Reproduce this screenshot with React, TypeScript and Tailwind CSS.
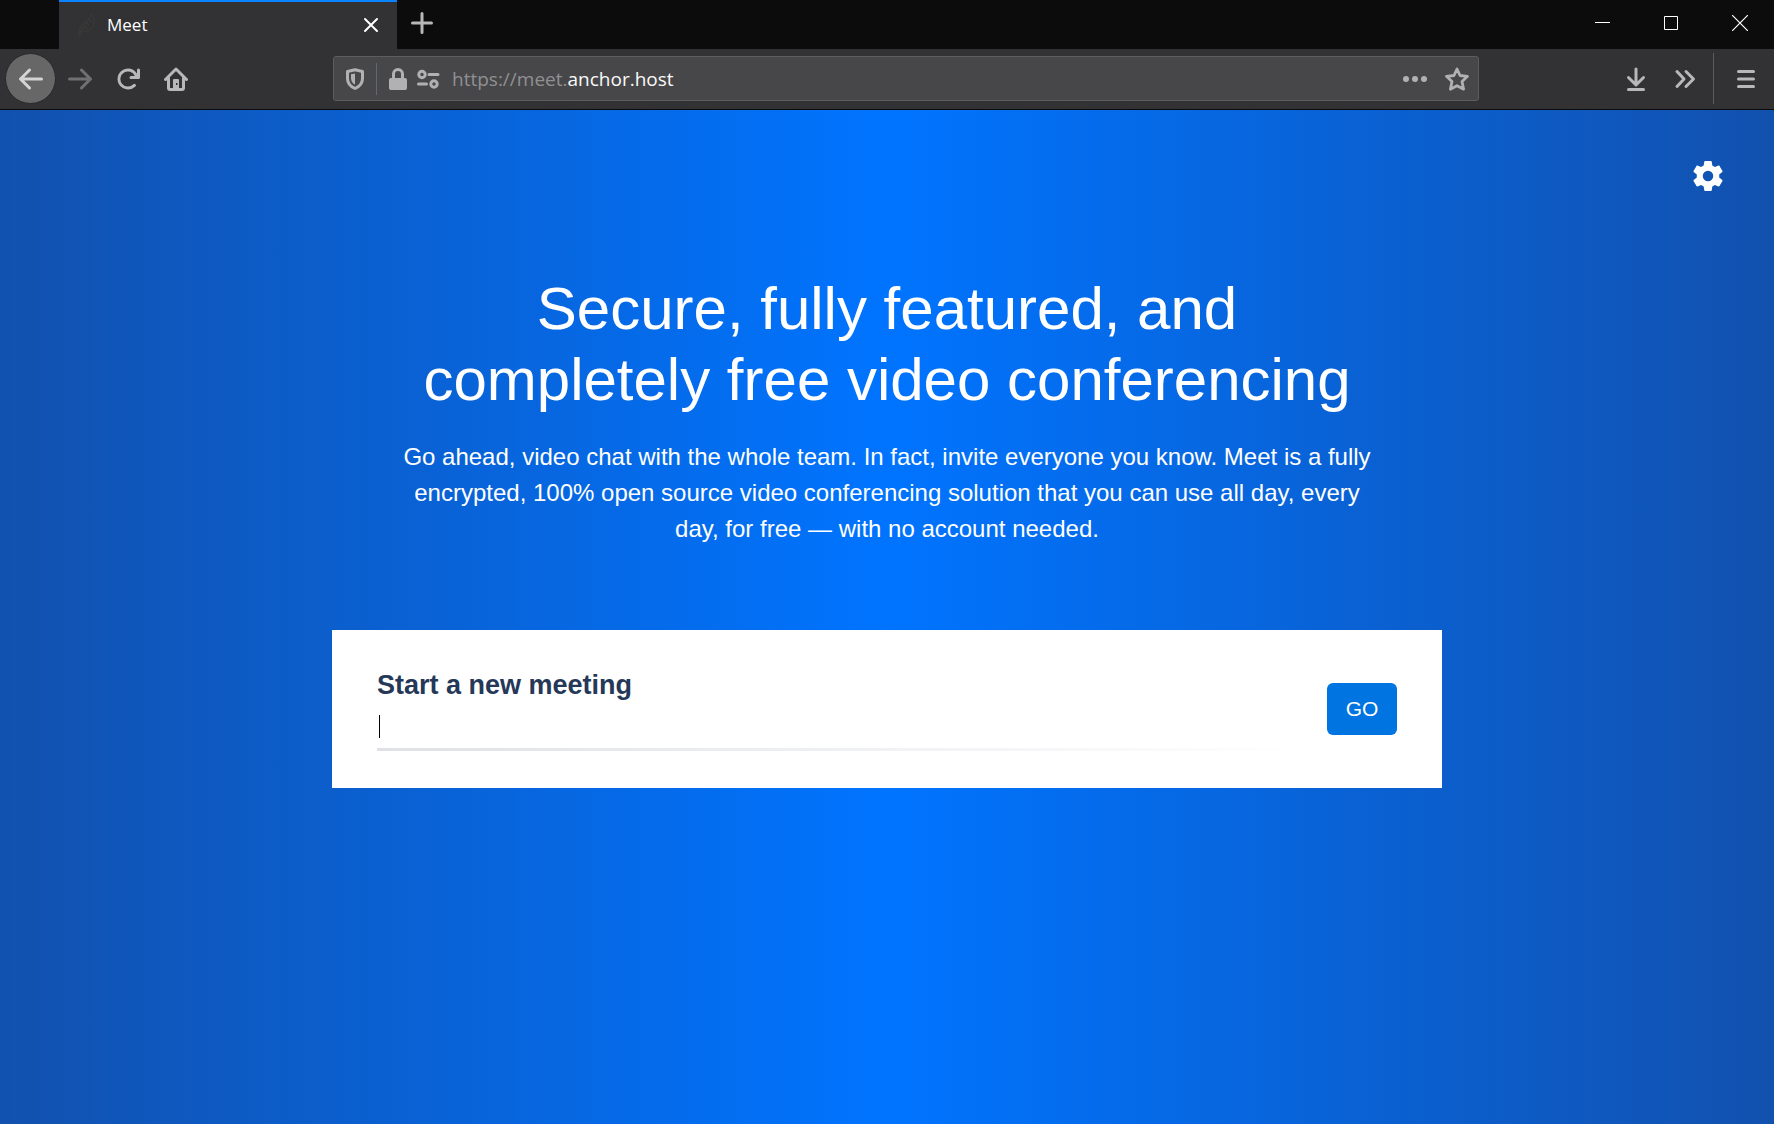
import type { ReactNode } from "react";

function Icon({ children, className = "size-6" }: { children: ReactNode; className?: string }) {
  return (
    <svg viewBox="0 0 24 24" className={className} fill="none" stroke="currentColor" strokeWidth="3" strokeLinecap="round" strokeLinejoin="round" aria-hidden="true">
      {children}
    </svg>
  );
}

const gear =
  "M12,15.5A3.5,3.5 0 0,1 8.5,12A3.5,3.5 0 0,1 12,8.5A3.5,3.5 0 0,1 15.5,12A3.5,3.5 0 0,1 12,15.5M19.43,12.97C19.47,12.65 19.5,12.33 19.5,12C19.5,11.67 19.47,11.34 19.43,11L21.54,9.37C21.73,9.22 21.78,8.95 21.66,8.73L19.66,5.27C19.54,5.05 19.27,4.96 19.05,5.05L16.56,6.05C16.04,5.66 15.5,5.32 14.87,5.07L14.5,2.42C14.46,2.18 14.25,2 14,2H10C9.75,2 9.54,2.18 9.5,2.42L9.13,5.07C8.5,5.32 7.96,5.66 7.44,6.05L4.95,5.05C4.73,4.96 4.46,5.05 4.34,5.27L2.34,8.73C2.21,8.95 2.27,9.22 2.46,9.37L4.57,11C4.53,11.34 4.5,11.67 4.5,12C4.5,12.33 4.53,12.65 4.57,12.97L2.46,14.63C2.27,14.78 2.21,15.05 2.34,15.27L4.34,18.73C4.46,18.95 4.73,19.03 4.95,18.95L7.44,17.94C7.96,18.34 8.5,18.68 9.13,18.93L9.5,21.58C9.54,21.82 9.75,22 10,22H14C14.25,22 14.46,21.82 14.5,21.58L14.87,18.93C15.5,18.67 16.04,18.34 16.56,17.94L19.05,18.95C19.27,19.03 19.54,18.95 19.66,18.73L21.66,15.27C21.78,15.05 21.73,14.78 21.54,14.63L19.43,12.97Z";

function TabStrip() {
  return (
    <header className="flex h-[49px] items-stretch bg-[#0c0c0d] pl-[59px]">
      <div className="flex w-[338px] items-center border-t-2 border-[#0a84ff] bg-[#323234] pr-3.5 pb-0.5 pl-[18px] text-white">
        <Icon className="size-6 text-[#3b3b38]">
          <g strokeWidth="1">
            <path d="M2 23c0-3 0-6 2-10 3-4 9-5 10-12 3 4 4 8 2 12-2 5-7 6-12 5" />
            <path d="M2 23c2-6 5-10 9-14M8 10c3-1 4 1 3 3M12 6l2 3M7 15c2-1 4 0 3 2" />
          </g>
        </Icon>
        <span className="ml-1.5 flex-1 text-[17px] leading-6">Meet</span>
        <button type="button" aria-label="Close tab" className="flex size-6 items-center justify-center">
          <Icon><path strokeWidth="2" d="M6 6l12 12M18 6L6 18" /></Icon>
        </button>
      </div>
      <button type="button" aria-label="New tab" className="ml-[13px] mb-[3px] flex w-6 items-center text-[#b8b8b9]">
        <Icon><path strokeWidth="3" d="M2.500 12h19M12 2.500v19" /></Icon>
      </button>
      <div className="ml-auto flex pb-[3px] text-white">
        <button type="button" aria-label="Minimize" className="flex w-[69px] items-center justify-center">
          <svg className="size-4" viewBox="0 0 16 16" aria-hidden="true"><path d="M1 7.500h15" stroke="currentColor" /></svg>
        </button>
        <button type="button" aria-label="Maximize" className="flex w-[69px] items-center justify-center">
          <svg className="size-4" viewBox="0 0 16 16" aria-hidden="true"><path d="M1.500 1.500h13v13h-13z" stroke="currentColor" fill="none" /></svg>
        </button>
        <button type="button" aria-label="Close window" className="flex w-[69px] items-center justify-center">
          <svg className="size-4" viewBox="0 0 16 16" aria-hidden="true"><path d="M0 0l16 16M16 0L0 16" stroke="currentColor" strokeWidth="1.200" /></svg>
        </button>
      </div>
    </header>
  );
}

function Toolbar() {
  return (
    <nav aria-label="Browser toolbar" className="flex h-[61px] items-center border-b border-[#0c0c0d] bg-[#323234] pb-px pl-[5px] text-[#b8b8b9]">
      <button type="button" aria-label="Back" className="flex size-[51px] items-center justify-center rounded-full border border-[#29292b] bg-[#676768] text-[#d4d4d4]">
        <svg viewBox="0 0 16 16" className="size-6" fill="currentColor" aria-hidden="true">
          <path d="M15 7H3.414l4.293-4.293a1 1 0 0 0-1.414-1.414l-6 6a1 1 0 0 0 0 1.414l6 6a1 1 0 0 0 1.414-1.414L3.414 9H15a1 1 0 0 0 0-2z" />
        </svg>
      </button>
      <button type="button" aria-label="Forward" disabled className="ml-3 text-[#707071]">
        <svg viewBox="0 0 16 16" className="size-6 -scale-x-100" fill="currentColor" aria-hidden="true">
          <path d="M15 7H3.414l4.293-4.293a1 1 0 0 0-1.414-1.414l-6 6a1 1 0 0 0 0 1.414l6 6a1 1 0 0 0 1.414-1.414L3.414 9H15a1 1 0 0 0 0-2z" />
        </svg>
      </button>
      <button type="button" aria-label="Reload" className="ml-6">
        <svg viewBox="0 0 16 16" className="size-6" fill="currentColor" aria-hidden="true">
          <path d="M15 1a1 1 0 0 0-1 1v2.418A6.995 6.995 0 1 0 8 15a6.954 6.954 0 0 0 4.950-2.050 1 1 0 0 0-1.414-1.414A5.019 5.019 0 1 1 12.549 6H10a1 1 0 0 0 0 2h5a1 1 0 0 0 1-1V2a1 1 0 0 0-1-1z" />
        </svg>
      </button>
      <button type="button" aria-label="Home" className="ml-6">
        <Icon>
          <path d="M1.500 12.500L12 2l10.500 10.500M4.500 11v10q0 1.500 1.500 1.500h12q1.500 0 1.500-1.500V11" />
          <path stroke="none" fill="currentColor" fillRule="evenodd" d="M9 22v-9q0-1 1-1h4q1 0 1 1v9zM12 16v2h1.500v-2z" />
        </Icon>
      </button>
      <div className="mr-[145px] ml-[145px] flex h-[45px] flex-1 items-center rounded-[3px] border border-[#5d5d5f] bg-[#474749] px-[9px] text-[#b1b1b3]">
        <button type="button" aria-label="Tracking protection">
          <Icon>
            <path strokeWidth="3" d="M12 2.800l7.500 1.700v7c0 4.500-3 8-7.500 10-4.500-2-7.500-5.500-7.500-10v-7z" />
            <path stroke="none" fill="currentColor" d="M12 6.500v11.300c-2.500-1.500-4-3.700-4-6.500V7.300z" />
          </Icon>
        </button>
        <span className="ml-[9px] h-8 w-px bg-[#606873]" />
        <button type="button" aria-label="Site security" className="ml-[9px]">
          <Icon>
            <path d="M7.500 11V7a4.500 4.500 0 0 1 9 0V11" />
            <rect x="3" y="11" width="18" height="12" rx="2" fill="currentColor" stroke="none" />
          </Icon>
        </button>
        <button type="button" aria-label="Permissions" className="ml-1.5">
          <Icon>
            <circle cx="6" cy="7.500" r="3.200" />
            <path d="M13 7.500h9M2.500 17h8" />
            <circle cx="18" cy="17" r="3.200" />
          </Icon>
        </button>
        <a href="https://meet.anchor.host" className="ml-3 flex-1 text-[19px] leading-7 text-[#909092]">
          https://meet.<span className="text-[#f9f9fa]">anchor.host</span>
        </a>
        <button type="button" aria-label="Page actions">
          <Icon>
            <g fill="currentColor" stroke="none"><circle cx="3" cy="12" r="3" /><circle cx="12" cy="12" r="3" /><circle cx="21" cy="12" r="3" /></g>
          </Icon>
        </button>
        <button type="button" aria-label="Bookmark this page" className="ml-[18px]">
          <Icon><path strokeWidth="2.800" d="M12 2l3 6.500 7.500.8-5.500 5.200 1.600 7.700L12 18.700l-6.600 3.500L7 14.500 1.500 9.300 9 8.500z" /></Icon>
        </button>
      </div>
      <button type="button" aria-label="Downloads" className="mr-[25px]">
        <Icon><path d="M12 2v15M4.500 10.500L12 18l7.500-7.500M4.500 22.500h15" /></Icon>
      </button>
      <button type="button" aria-label="More tools" className="mr-4">
        <Icon><path d="M4 4.500l7 7.500-7 7.500M13 4.500l7.500 7.500-7.500 7.500" /></Icon>
      </button>
      <span className="h-[51px] w-px bg-[#5b5b5d]" />
      <button type="button" aria-label="Open menu" className="mr-4 ml-5">
        <Icon><path d="M4.500 4.500h15M4.500 12h15M4.500 19.500h15" /></Icon>
      </button>
    </nav>
  );
}

function Welcome() {
  return (
    <main className="flex flex-1 flex-col items-center bg-[linear-gradient(90deg,#1251ae_0%,#0074ff_50%,#1251ae_100%)] px-12 pt-12 font-['Liberation_Sans',sans-serif] text-white">
      <button type="button" aria-label="Settings" className="self-end">
        <svg viewBox="0 0 24 24" className="size-9" fill="currentColor" aria-hidden="true"><path d={gear} /></svg>
      </button>
      <h1 className="mt-[79px] max-w-[975px] text-center text-[60px] leading-[71px]">
        Secure, fully featured, and completely free video conferencing
      </h1>
      <p className="mt-6 max-w-[975px] text-center text-2xl leading-9">
        Go ahead, video chat with the whole team. In fact, invite everyone you know. Meet is a fully encrypted, 100% open source video conferencing solution that you can use all day, every day, for free — with no account needed.
      </p>
      <form className="mt-[83px] flex w-full max-w-[1110px] items-center bg-white px-[45px] py-[37px]" onSubmit={(e) => e.preventDefault()}>
        <div className="flex-1">
          <label htmlFor="room" className="block text-[27px] leading-9 font-bold text-[#253858]">Start a new meeting</label>
          <div className="relative">
            <input id="room" type="text" className="block h-[45px] w-full bg-transparent text-[21px] text-[#253858] caret-transparent outline-none" />
            <span className="absolute top-3 left-0.5 h-[23px] w-px bg-black" />
          </div>
          <div className="h-[3px] bg-[linear-gradient(90deg,#dfe1e6,#ffffff)]" />
        </div>
        <button type="submit" className="ml-[15px] h-[52px] w-[70px] rounded-md bg-[#0074e0] text-[21px] text-white">GO</button>
      </form>
    </main>
  );
}

export default function App() {
  return (
    <div className="flex min-h-screen flex-col font-['Open_Sans',sans-serif]">
      <TabStrip />
      <Toolbar />
      <Welcome />
    </div>
  );
}
